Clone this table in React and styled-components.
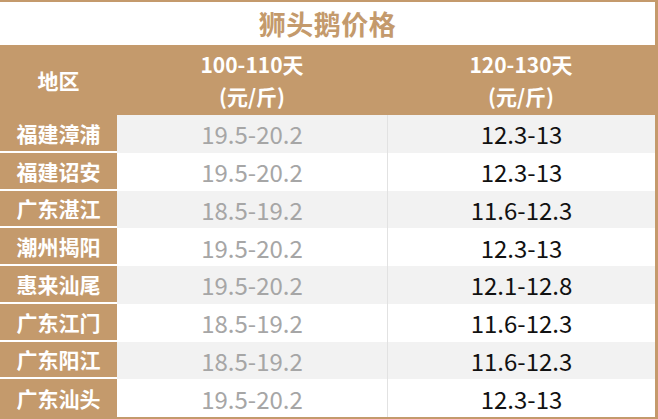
import React from 'react';
import styled, { createGlobalStyle } from 'styled-components';

const TAN = '#c49a6c';

const GlobalStyle = createGlobalStyle`
  html, body {
    margin: 0;
    padding: 0;
    background: #fff;
  }
  body {
    font-family: "Noto Sans CJK SC", "Noto Sans", sans-serif;
  }
`;

const rows = [
  { area: '福建漳浦', a: '19.5-20.2', b: '12.3-13' },
  { area: '福建诏安', a: '19.5-20.2', b: '12.3-13' },
  { area: '广东湛江', a: '18.5-19.2', b: '11.6-12.3' },
  { area: '潮州揭阳', a: '19.5-20.2', b: '12.3-13' },
  { area: '惠来汕尾', a: '19.5-20.2', b: '12.1-12.8' },
  { area: '广东江门', a: '18.5-19.2', b: '11.6-12.3' },
  { area: '广东阳江', a: '18.5-19.2', b: '11.6-12.3' },
  { area: '广东汕头', a: '19.5-20.2', b: '12.3-13' },
];

const App = () => {
  return (
    <>
      <GlobalStyle />
      <Table>
        <Title>狮头鹅价格</Title>
        <HeadCell>地区</HeadCell>
        <HeadCell>
          <span>100-110天</span>
          <span>(元/斤)</span>
        </HeadCell>
        <HeadCell>
          <span>120-130天</span>
          <span>(元/斤)</span>
        </HeadCell>
        {rows.map((row, i) => (
          <React.Fragment key={row.area}>
            <AreaCell last={i === rows.length - 1}>{row.area}</AreaCell>
            <PriceCell shaded={i % 2 === 0} muted>
              {row.a}
            </PriceCell>
            <PriceCell shaded={i % 2 === 0} divided>
              {row.b}
            </PriceCell>
          </React.Fragment>
        ))}
      </Table>
    </>
  );
};

export default App;

const Table = styled.div`
  display: grid;
  grid-template-columns: 117px 270px 1fr;
  grid-template-rows: 43px 70px repeat(8, 1fr);
  width: 658px;
  height: 419px;
  box-sizing: border-box;
  border-top: 2px solid ${TAN};
  border-right: 3px solid ${TAN};
  border-bottom: 2px solid ${TAN};
  background: #fff;
`;

const Title = styled.div`
  grid-column: 1 / -1;
  display: flex;
  justify-content: center;
  align-items: center;
  color: ${TAN};
  font-size: 27px;
  font-weight: 700;
  letter-spacing: 0.5px;
`;

const HeadCell = styled.div`
  display: flex;
  flex-direction: column;
  justify-content: center;
  align-items: center;
  background: ${TAN};
  color: #fff;
  font-size: 21px;
  font-weight: 700;
  line-height: 32px;
`;

const AreaCell = styled.div`
  display: flex;
  justify-content: center;
  align-items: center;
  background: ${TAN};
  color: #fff;
  font-size: 21px;
  font-weight: 700;
  border-bottom: ${(props) => (props.last ? 'none' : '2px solid #fff')};
`;

const PriceCell = styled.div`
  display: flex;
  justify-content: center;
  align-items: center;
  background: ${(props) => (props.shaded ? '#f2f2f2' : '#fff')};
  color: ${(props) => (props.muted ? '#a6a6a6' : '#111')};
  font-size: 24px;
  border-left: ${(props) => (props.divided ? '1px solid #e2e2e2' : 'none')};
`;
